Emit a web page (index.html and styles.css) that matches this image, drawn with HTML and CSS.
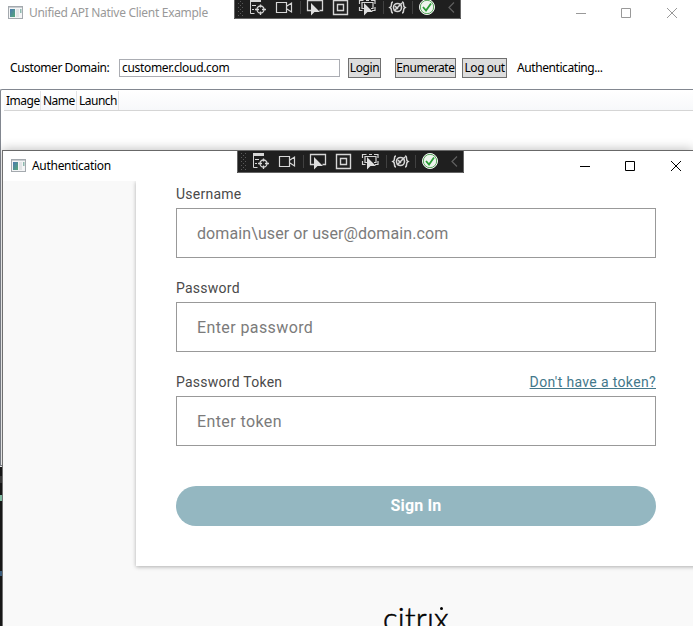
FILE: index.html
```html
<!DOCTYPE html>
<html lang="en">
<head>
<meta charset="utf-8">
<title>Unified API Native Client Example</title>
<link rel="stylesheet" href="styles.css">
</head>
<body>
<svg class="defs" width="0" height="0">
  <defs>
    <linearGradient id="screen" x1="0" y1="0" x2="1" y2="1">
      <stop offset="0" stop-color="#4a78b0"/><stop offset="1" stop-color="#56a878"/>
    </linearGradient>
    <symbol id="app" viewBox="0 0 15 14">
      <rect x=".5" y=".5" width="14" height="12" fill="#f4f5f6" stroke="#a4a9ae"/>
      <path d="M1 1.500h13" stroke="#c9cdd1"/>
      <rect x="2" y="3" width="5" height="8" fill="url(#screen)"/>
      <rect x="8" y="3" width="3" height="8" fill="#e2e4e6"/>
      <rect x="12" y="3" width="1.500" height="4" fill="#8fbab0"/>
    </symbol>
    <symbol id="tools" viewBox="0 0 227 22">
      <rect width="227" height="22" fill="#1f1f1f"/>
      <path d="M.5 0v21.500h226V0" fill="none" stroke="#656565"/>
      <g stroke="#5a5a5a" stroke-dasharray="1 3">
        <path d="M4.500 2v17M8.500 2v17"/><path d="M6.500 4v15"/>
      </g>
      <g fill="none" stroke="#d6d6d6">
        <path d="M16 3.500h11" stroke-width="3"/>
        <path d="M16.500 4v12.500h4M18 8.500h4M18 12.500h2"/>
        <circle cx="26.500" cy="12.500" r="3.500" stroke-width="1.300"/>
        <path d="M26.500 7.500v3M26.500 14.500v3.500M21 12.500h4M28 12.500h4" stroke-width="1.300"/>
        <path d="M42.500 5.500h10v10h-10zM53 9l4.500-3v9l-4.500-3" stroke-width="1.200"/>
        <path d="M77 13.500h-3.500v-10h15v10h-3" stroke-width="1.300"/>
        <path d="M99.500 3.500h14v14h-14zM103.500 7.500h6v6h-6z" stroke-width="1.400"/>
        <path d="M125.500 7V3.500h4M137 3.500h4V7M125.500 10v3.500h3M141 10v3.500h-3M130 11.500h-2v-6h11v6h-2M132 3.500h3" stroke-width="1.200"/>
        <path d="M159 5c-3 0 0 4-3 5.500 3 1.500 0 5.500 3 5.500M168 5c3 0 0 4 3 5.500-3 1.500 0 5.500-3 5.500" stroke-width="1.500"/>
        <circle cx="163.500" cy="10.500" r="4" stroke-width="1.600"/><path d="m160 14 8-8M161 9l3 3" stroke-width="1.600"/>
      </g>
      <path d="M77 6v12.500l3.500-3.500h5.500zM130 6v12.500l3.500-3.500h5.500z" fill="#dedede"/>
      <path d="M66.500 4v13M149.500 4v13M178.500 4v13" stroke="#414141"/>
      <circle cx="193" cy="10" r="7.500" fill="#edf5ed" stroke="#fff"/>
      <circle cx="193" cy="10" r="6.700" fill="none" stroke="#57a45b"/>
      <path d="m189 10 3 3.500 5-7" fill="none" stroke="#299c35" stroke-width="1.800"/>
      <path d="m220 5.500-5 5 5 5" fill="none" stroke="#606060" stroke-width="1.200"/>
    </symbol>
    <symbol id="caption" viewBox="0 0 102 12">
      <path d="M0 6.500h10M45.500 1.500h9v9h-9zM91 1l10 10M101 1 91 11" fill="none" stroke="currentColor"/>
    </symbol>
  </defs>
</svg>
<main class="desktop">
  <section class="window">
    <header class="titlebar inactive">
      <svg class="app-icon"><use href="#app"/></svg>
      <span class="title">Unified API Native Client Example</span>
      <svg class="caption"><use href="#caption"/></svg>
    </header>
    <svg class="tools main-tools"><use href="#tools"/></svg>
    <div class="controls">
      <label for="domain">Customer Domain:</label>
      <input id="domain" class="domain" value="customer.cloud.com">
      <button class="login">Login</button>
      <button class="enumerate">Enumerate</button>
      <button class="logout">Log out</button>
      <span class="status">Authenticating...</span>
    </div>
    <div class="list">
      <div class="columns"><span class="c1">Image</span><span class="c2">Name</span><span class="c3">Launch</span></div>
    </div>
  </section>
  <div class="editor-edge"><i class="line a"></i><i class="line b"></i><i class="line c"></i></div>
  <section class="dialog">
    <header class="titlebar">
      <svg class="app-icon"><use href="#app"/></svg>
      <span class="title">Authentication</span>
      <svg class="caption"><use href="#caption"/></svg>
    </header>
    <svg class="tools auth-tools"><use href="#tools"/></svg>
    <div class="page">
      <form class="card">
        <div class="field"><div class="label-row"><label for="user">Username</label></div><input id="user" class="w-user" placeholder="domain\user or user@domain.com"></div>
        <div class="field"><div class="label-row"><label for="pass">Password</label></div><input id="pass" placeholder="Enter password"></div>
        <div class="field"><div class="label-row"><label for="token">Password Token</label><a href="#">Don't have a token?</a></div><input id="token" placeholder="Enter token"></div>
        <button class="sign-in" type="button">Sign In</button>
      </form>
      <div class="brand">citrı<span class="x">x</span></div>
    </div>
  </section>
</main>
</body>
</html>
```
FILE: styles.css
```css
* { box-sizing: border-box; }
body { margin: 0; overflow: hidden; font: 12px/16px "Noto Sans", sans-serif; color: #000; }
button, input { font: inherit; color: inherit; margin: 0; border-radius: 0; }
.defs { position: absolute; }
.desktop { position: relative; width: 693px; height: 626px; overflow: hidden; background: #fff; }
.window { height: 467px; background: #fff; }
.titlebar { display: flex; align-items: center; height: 26px; padding-left: 8px; }
.app-icon { width: 15px; height: 14px; margin-right: 6px; flex: none; }
.title { letter-spacing: -.3px; white-space: nowrap; }
.caption { width: 102px; height: 12px; margin-left: auto; margin-right: 15px; color: #000; }
.inactive { height: 25px; color: #999; }
.inactive .caption { color: #999; }
.tools { position: absolute; width: 227px; height: 22px; }
.main-tools { left: 234px; top: -3px; }
.auth-tools { left: 234px; top: 0; }
.controls { display: flex; align-items: center; height: 65px; padding: 20px 0 0 10px; letter-spacing: -.42px; white-space: nowrap; }
.controls label { width: 109px; }
.domain { width: 221px; height: 18px; padding: 0 2px; border: 1px solid #abadb3; letter-spacing: -.32px; }
.controls button { height: 20px; padding: 0; border: 1px solid #707070; background: #ddd; letter-spacing: -.42px; line-height: 17px; }
.controls .login { width: 33px; margin-left: 8px; }
.controls .enumerate { width: 61px; margin-left: 14px; }
.controls .logout { width: 45px; margin-left: 6px; }
.status { margin-left: 10px; }
.list { height: 377px; border: 1px solid #828790; border-right: 0; border-radius: 2px 0 0 0; padding: 1px 0 0 3px; margin-top: -1px; }
.columns { display: flex; height: 20px; border-bottom: 1px solid #d5d5d5; background: linear-gradient(#fff, #f7f8fa); line-height: 19px; letter-spacing: -.5px; }
.columns span { border-right: 1px solid #e3e4e6; padding-left: 2px; }
.c1 { width: 37px; } .c2 { width: 36px; } .c3 { width: 42px; }
.editor-edge { width: 3px; height: 159px; background: #1a1a1a; display: flow-root; }
.line { display: block; height: 4px; width: 2px; }
.a { background: #3d3d3d; margin-top: 9px; height: 7px; }
.b { background: #8fd0b4; margin-top: 12px; height: 6px; }
.c { background: #43688a; margin-top: 70px; height: 5px; }
.dialog { position: absolute; left: 2px; top: 150px; width: 691px; height: 476px; background: #fff; border-top: 1px solid #686868; border-left: 1px solid #707070; box-shadow: 0 -1px 10px rgba(0,0,0,.25); }
.dialog .titlebar { height: 30px; }
.dialog .caption { margin-right: 11px; }
.page { height: 445px; background: #f9f9f9; overflow: hidden; font-family: Roboto, sans-serif; }
.card { width: 600px; height: 385px; margin-left: 133px; padding: 4px 0 0 40px; background: #fff; box-shadow: 0 1px 4px rgba(0,0,0,.3); }
.field { width: 480px; height: 94px; }
.label-row { display: flex; justify-content: space-between; height: 23px; font-size: 14px; line-height: 18px; color: #4a4a4a; letter-spacing: .25px; }
.label-row a { color: #43788b; letter-spacing: .35px; }
.field input { display: block; width: 480px; height: 50px; padding: 0 20px; border: 1px solid #999; background: #fff; font-size: 16px; letter-spacing: .4px; }
.field .w-user { letter-spacing: .1px; }
.field input::placeholder { color: #7b7b7b; opacity: 1; }
.sign-in { display: block; width: 480px; height: 40px; margin-top: 19px; border: 0; border-radius: 20px; background: #94b7c1; color: #fff; font-size: 16px; font-weight: 700; letter-spacing: .15px; }
.brand { width: 80px; margin: 34px 0 0 380px; font: 300 31px/36px Lato, sans-serif; color: #000; white-space: nowrap; letter-spacing: .2px; -webkit-text-stroke: .5px; }
.x { position: relative; }
.x::after { content: ""; position: absolute; left: 6px; top: 8px; width: 3px; height: 3px; border-radius: 50%; background: #000; }
```
